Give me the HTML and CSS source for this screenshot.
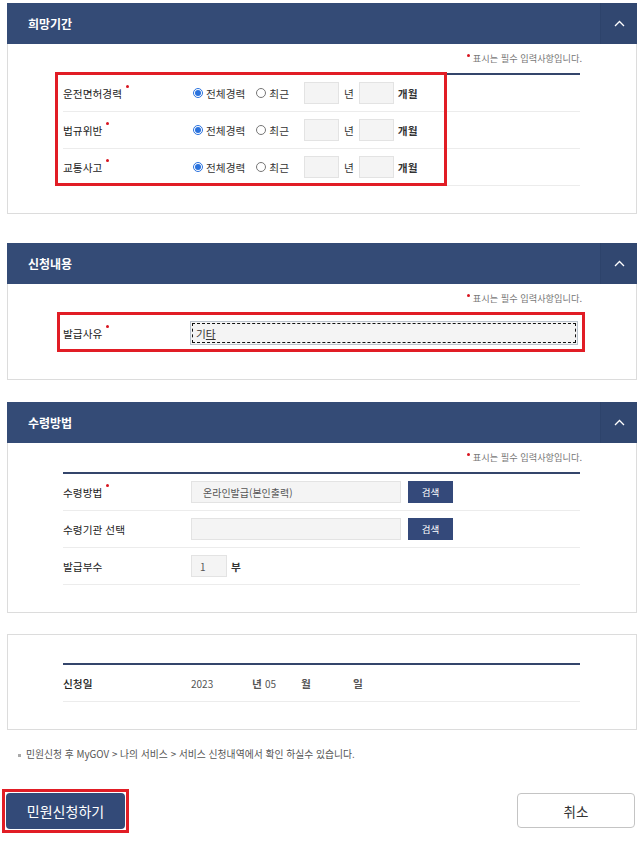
FILE: index.html
```html
<!DOCTYPE html>
<html lang="ko">
<head>
    <meta charset="UTF-8">
    <meta name="viewport" content="width=device-width, initial-scale=1.0">
    <title>민원신청</title>
    <link rel="stylesheet" href="styles.css">
</head>
<body>

<div class="page">

    <!-- 희망기간 -->
    <section class="panel">
        <div class="panel-head">
            <h2>희망기간</h2>
            <button class="toggle" type="button" aria-label="접기">
                <svg width="11" height="7" viewBox="0 0 11 7"><polyline points="1,6 5.5,1.5 10,6" fill="none" stroke="#fff" stroke-width="1.3"/></svg>
            </button>
        </div>
        <div class="panel-body">
            <p class="req-note">표시는 필수 입력사항입니다.</p>
            <div class="form-table">
                <div class="mark mark-period"></div>
                <div class="row">
                    <div class="label req">운전면허경력</div>
                    <div class="field">
                        <label class="opt"><input type="radio" name="p1" checked>전체경력</label>
                        <label class="opt opt-last"><input type="radio" name="p1">최근</label>
                        <input class="box num" type="text">
                        <span class="unit">년</span>
                        <input class="box num" type="text">
                        <span class="unit strong">개월</span>
                    </div>
                </div>
                <div class="row">
                    <div class="label req">법규위반</div>
                    <div class="field">
                        <label class="opt"><input type="radio" name="p2" checked>전체경력</label>
                        <label class="opt opt-last"><input type="radio" name="p2">최근</label>
                        <input class="box num" type="text">
                        <span class="unit">년</span>
                        <input class="box num" type="text">
                        <span class="unit strong">개월</span>
                    </div>
                </div>
                <div class="row">
                    <div class="label req">교통사고</div>
                    <div class="field">
                        <label class="opt"><input type="radio" name="p3" checked>전체경력</label>
                        <label class="opt opt-last"><input type="radio" name="p3">최근</label>
                        <input class="box num" type="text">
                        <span class="unit">년</span>
                        <input class="box num" type="text">
                        <span class="unit strong">개월</span>
                    </div>
                </div>
            </div>
        </div>
    </section>

    <!-- 신청내용 -->
    <section class="panel panel-apply">
        <div class="panel-head">
            <h2>신청내용</h2>
            <button class="toggle" type="button" aria-label="접기">
                <svg width="11" height="7" viewBox="0 0 11 7"><polyline points="1,6 5.5,1.5 10,6" fill="none" stroke="#fff" stroke-width="1.3"/></svg>
            </button>
        </div>
        <div class="panel-body">
            <p class="req-note">표시는 필수 입력사항입니다.</p>
            <div class="form-table">
                <div class="mark mark-reason"></div>
                <div class="row">
                    <div class="label req">발급사유</div>
                    <div class="field">
                        <div class="box reason">기<u>타</u></div>
                    </div>
                </div>
            </div>
        </div>
    </section>

    <!-- 수령방법 -->
    <section class="panel panel-receive">
        <div class="panel-head">
            <h2>수령방법</h2>
            <button class="toggle" type="button" aria-label="접기">
                <svg width="11" height="7" viewBox="0 0 11 7"><polyline points="1,6 5.5,1.5 10,6" fill="none" stroke="#fff" stroke-width="1.3"/></svg>
            </button>
        </div>
        <div class="panel-body">
            <p class="req-note">표시는 필수 입력사항입니다.</p>
            <div class="form-table">
                <div class="row">
                    <div class="label req">수령방법</div>
                    <div class="field">
                        <input class="box wide" type="text" value="온라인발급(본인출력)" readonly>
                        <button class="btn-search" type="button">검색</button>
                    </div>
                </div>
                <div class="row">
                    <div class="label">수령기관 선택</div>
                    <div class="field">
                        <input class="box wide" type="text" readonly>
                        <button class="btn-search" type="button">검색</button>
                    </div>
                </div>
                <div class="row">
                    <div class="label">발급부수</div>
                    <div class="field">
                        <input class="box count" type="text" value="1">
                        <span class="unit strong">부</span>
                    </div>
                </div>
            </div>
        </div>
    </section>

    <!-- 신청일 -->
    <section class="panel panel-date">
        <div class="panel-body">
            <div class="form-table">
                <div class="row">
                    <div class="label medium">신청일</div>
                    <div class="field date">
                        <span class="d-year">2023</span>
                        <span class="d-unit strong">년</span>
                        <span class="d-month">05</span>
                        <span class="d-unit2 strong">월</span>
                        <span class="strong">일</span>
                    </div>
                </div>
            </div>
        </div>
    </section>

    <p class="foot-note">민원신청 후 MyGOV &gt; 나의 서비스 &gt; 서비스 신청내역에서 확인 하실수 있습니다.</p>

    <div class="actions">
        <span class="mark-submit">
            <button class="btn-submit" type="button">민원신청하기</button>
        </span>
        <button class="btn-cancel" type="button">취소</button>
    </div>

</div>

</body>
</html>
```

FILE: styles.css
```css
body {
    margin: 0;
    background-color: #fff;
    color: #333;
    font-family: "Noto Sans CJK KR", "Noto Sans", sans-serif;
}
.page {
    padding: 3px 5px 0 7px;
}

/* panels */
.panel-apply {
    margin-top: 29px;
}
.panel-receive {
    margin-top: 22px;
}
.panel-date {
    margin-top: 21px;
}
.panel-head {
    display: flex;
    height: 41px;
    background-color: #344b76;
}
.panel-head h2 {
    flex: 1;
    margin: 0;
    padding-left: 21px;
    color: #fff;
    font-size: 12px;
    font-weight: 700;
    line-height: 41px;
}
.toggle {
    width: 37px;
    padding: 0;
    border: none;
    border-left: 1px solid #2d436b;
    background-color: #314770;
    display: flex;
    align-items: center;
    justify-content: center;
    cursor: pointer;
}
.panel-body {
    border: 1px solid #dcdcdc;
    border-top: none;
    padding: 7px 56px 27px 55px;
}
.panel-date .panel-body {
    border-top: 1px solid #dcdcdc;
    padding-top: 28px;
}
.req-note {
    margin: 0 -2px 8px 0;
    text-align: right;
    font-size: 9.2px;
    line-height: 14px;
    color: #777;
}
.req-note::before,
.label.req::after {
    content: '';
    display: inline-block;
    width: 3px;
    height: 3px;
    border-radius: 50%;
    background-color: #d8141f;
    position: relative;
}
.req-note::before {
    top: -5px;
    margin-right: 3px;
}

/* form rows */
.form-table {
    position: relative;
    border-top: 2px solid #34456b;
}
.row {
    display: flex;
    align-items: center;
    height: 36px;
    border-bottom: 1px solid #ececec;
}
.label {
    width: 128px;
    flex-shrink: 0;
    font-size: 10.7px;
    color: #222;
}
.label.req::after {
    top: -10px;
    margin-left: 4px;
}
.field {
    display: flex;
    align-items: center;
    font-size: 10.7px;
    color: #333;
}
.strong {
    font-weight: 700;
}
.medium {
    font-weight: 500;
}
.opt {
    display: flex;
    align-items: center;
    margin-right: 9px;
}
.opt-last {
    margin-right: 15px;
}
.opt input {
    width: 10px;
    height: 10px;
    margin: 0 3px 0 2px;
    accent-color: #2a72dd;
}
.box {
    box-sizing: border-box;
    height: 22px;
    padding: 0 8px;
    border: 1px solid #e3e3e3;
    background-color: #f4f4f4;
    font-family: inherit;
    font-size: 10px;
    color: #555;
}
.box.num {
    width: 35px;
}
.unit {
    margin: 0 5px;
}
.unit.strong {
    margin: 0 4px;
    font-weight: 600;
}
.box.reason {
    width: 388px;
    height: 24px;
    margin-left: -1px;
    padding: 0 5px;
    border-color: #b9c2cc;
    display: flex;
    align-items: center;
    color: #333;
    font-size: 10.7px;
    outline: 1px dashed #111;
    outline-offset: -3px;
}
.box.wide {
    width: 210px;
    padding: 0 11px;
}
.box.count {
    width: 36px;
}
.btn-search {
    width: 45px;
    height: 22px;
    margin-left: 7px;
    border: none;
    background-color: #34497a;
    color: #fff;
    font-family: inherit;
    font-size: 9.5px;
    cursor: pointer;
}

/* date row */
.date {
    color: #555;
}
.d-year {
    width: 61px;
    font-size: 10px;
}
.d-unit {
    width: 10px;
    margin-right: 3px;
}
.d-month {
    width: 36px;
    font-size: 10px;
}
.d-unit2 {
    width: 52px;
}

/* red highlight boxes */
.mark {
    position: absolute;
    top: -3px;
    box-sizing: border-box;
    border: 3px solid #e11d25;
    pointer-events: none;
}
.mark-period {
    left: -8px;
    width: 392px;
    height: 114px;
}
.mark-reason {
    left: -6px;
    width: 528px;
    height: 40px;
}

/* bottom */
.foot-note {
    margin: 17px 0 0 11px;
    font-size: 9.8px;
    line-height: 14px;
    color: #555;
}
.foot-note::before {
    content: '';
    display: inline-block;
    width: 3px;
    height: 3px;
    margin-right: 5px;
    background-color: #aaa;
    vertical-align: middle;
}
.actions {
    display: flex;
    justify-content: space-between;
    align-items: flex-end;
    margin-top: 28px;
    padding-right: 2px;
}
.mark-submit {
    display: flex;
    margin-left: -5px;
    padding: 1px;
    border: 3px solid #e11d25;
}
.btn-submit {
    width: 119px;
    height: 36px;
    border: none;
    border-radius: 4px;
    background-color: #334a78;
    color: #fff;
    font-family: inherit;
    font-size: 14px;
    cursor: pointer;
}
.btn-cancel {
    width: 118px;
    height: 35px;
    margin-bottom: 5px;
    border: 1px solid #c4c4c4;
    border-radius: 4px;
    background-color: #fff;
    color: #333;
    font-family: inherit;
    font-size: 13.5px;
    cursor: pointer;
}
```
